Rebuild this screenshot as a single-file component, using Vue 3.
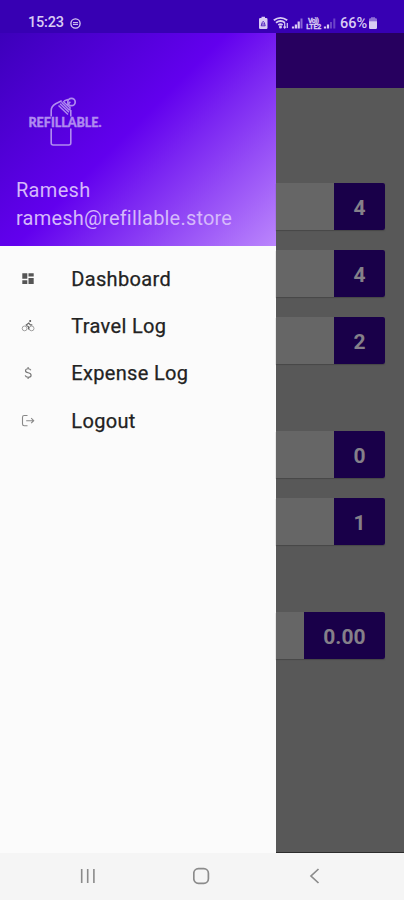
<script setup>
const groups = [['4', '4', '2'], ['0', '1'], ['0.00']]
const menu = [
  { label: 'Dashboard', icon: 'dashboard' },
  { label: 'Travel Log', icon: 'bike' },
  { label: 'Expense Log', icon: 'dollar' },
  { label: 'Logout', icon: 'logout' }
]
</script>

<template>
  <div class="phone">
    <header class="status">
      <span class="clock">15:23</span>
      <svg class="dnd" width="11" height="11" viewBox="0 0 11 11" fill="none" stroke="currentColor">
        <circle cx="5.5" cy="5.5" r="4.6" stroke-width="1.3" />
        <path d="M3 4.6h5M3 6.4h5" stroke-width="1" />
      </svg>
      <svg class="signals" width="78" height="16" viewBox="0 0 78 16" fill="none" stroke="currentColor">
        <path d="M0 4.2q0-1.200 1.200-1.200h1.300v-1.200h3.500v1.200h1.300q1.200 0 1.200 1.200v8.600q0 1.200-1.200 1.200h-6.100q-1.200 0-1.200-1.200z" fill="currentColor" stroke="none" />
        <path d="M2.200 10.800l.8-3 1.200-1.500 1.200 1.500.8 3zM3 9h2.400" stroke="#3700b3" stroke-width=".8" />
        <path d="M14.800 5.300q6.700-4.800 13.400 0M17 7.700q4.500-3.300 9 0M19.300 10q2.200-1.500 4.300 0" stroke-width="1.900" />
        <circle cx="21.500" cy="12" r="1.500" fill="currentColor" stroke="none" />
        <path d="M25.700 8v5m-1.200-1.300l1.200 1.300 1.200-1.300M28.300 13v-5" stroke-width="1.200" />
        <path d="M34 13.500v-2M36.900 13.500v-4M39.700 13.500v-7" stroke-width="2.200" />
        <path d="M42.500 13.500v-10" stroke-width="2" opacity=".5" />
        <text x="49" y="7.700" class="tiny" textLength="11">Vo))</text>
        <text x="47.300" y="14.200" class="tiny" textLength="15">LTE2</text>
        <path d="M66 13.500v-2M69 13.500v-4" stroke-width="2.200" />
        <path d="M72 13.500v-6.500M75.300 13.500v-10" stroke-width="2" opacity=".32" />
      </svg>
      <span class="percent">66%</span>
      <svg class="battery" width="10" height="14" viewBox="0 0 10 14" fill="currentColor">
        <path d="M1 3.500q0-1.300 1.300-1.300h.7v-1h4v1h.7q1.300 0 1.300 1.300v2.200h-8z" opacity=".55" />
        <path d="M1 5.300h8v6.500q0 1.200-1.200 1.200h-5.600q-1.200 0-1.200-1.200z" />
      </svg>
    </header>

    <main class="screen">
      <aside class="drawer">
        <div class="profile">
          <svg class="logo" width="80" height="52" viewBox="0 0 80 52" fill="none" stroke="currentColor">
            <path d="M23.200 19.500v-6q0-4 4.500-6.700l6-3M42.800 13v6.500M23.200 31.500v14.500q0 2 2 2h15.600q2 0 2-2v-14.500" stroke-width="1.600" />
            <path d="M30.500 8.500l9.500 9M32 6.800l9 8.500M33.500 5.200l8 8M35 4.200l7 6.500M36 4l4-1.500M42 9.500v4" stroke-width="1.400" />
            <circle cx="43.500" cy="5" r="3.700" stroke-width="1.700" />
            <path d="M39 8.500l3.300-3.800" stroke-width="1.600" />
            <text x="0.500" y="29.500" class="brand" textLength="73" lengthAdjust="spacingAndGlyphs">REFILLABLE.</text>
          </svg>
          <div class="name">Ramesh</div>
          <div class="email">ramesh@refillable.store</div>
        </div>
        <nav class="menu">
          <a v-for="item in menu" :key="item.label" class="item">
            <svg class="icon" width="14" height="14" viewBox="0 0 14 14" fill="none" stroke="currentColor">
              <path v-if="item.icon === 'dashboard'" d="M1.300 1.300h5v5.500h-5zM7.500 1.300h5.200v3.200h-5.200zM1.300 8.200h5v3.800h-5zM7.500 5.900h5.200v6.100h-5.200z" fill="#555" stroke="none" />
              <g v-else-if="item.icon === 'bike'" stroke="#888">
                <circle cx="3.600" cy="9.400" r="2.400" stroke-width=".8" />
                <circle cx="10.600" cy="9.400" r="2.400" stroke-width=".8" />
                <path d="M8.200 3.800l-3 2.300 2.300 1.600v2.800M7.800 4.200l1.500 1.700h2" stroke="#666" stroke-width="1.100" />
                <circle cx="9.200" cy="2" r="1" fill="#555" stroke="none" />
              </g>
              <path v-else-if="item.icon === 'dollar'" d="M9.800 4.200q-.6-1.500-2.700-1.500-2.600 0-2.600 2 0 1.500 2.700 2 2.900.6 2.900 2.500 0 2-2.900 2-2.500 0-3-1.900M7.100 1v1.700M7.100 11.200v1.700" stroke="#777" stroke-width="1.150" />
              <path v-else d="M6.500 1.500h-3.300q-1.700 0-1.700 1.700v6.800q0 1.700 1.700 1.700h3.300M5.200 6.700h7.500M10.200 4.200l2.500 2.500-2.500 2.500" stroke="#888" stroke-width="1.100" />
            </svg>
            <span>{{ item.label }}</span>
          </a>
        </nav>
      </aside>

      <section class="page">
        <div class="appbar"></div>
        <div class="lists">
          <div v-for="(group, g) in groups" :key="g" class="group">
            <div v-for="(value, i) in group" :key="i" class="card">
              <span class="value">{{ value }}</span>
            </div>
          </div>
        </div>
      </section>
    </main>

    <footer class="navbar">
      <svg width="18" height="18" viewBox="0 0 18 18" fill="none" stroke="currentColor" stroke-width="1.600">
        <path d="M2.700 2v14M8.700 2v14M14.900 2v14" />
      </svg>
      <svg width="18" height="18" viewBox="0 0 18 18" fill="none" stroke="currentColor" stroke-width="1.700">
        <rect x="0.800" y="1.700" width="14.600" height="14.600" rx="4.500" />
      </svg>
      <svg width="18" height="18" viewBox="0 0 18 18" fill="none" stroke="currentColor" stroke-width="1.700">
        <path d="M12.500 2l-7.500 7 7.500 7" />
      </svg>
    </footer>
  </div>
</template>

<style>
body {
  margin: 0;
}
</style>

<style scoped>
.phone {
  display: flex;
  flex-direction: column;
  width: 404px;
  height: 900px;
  overflow: hidden;
  font-family: Roboto, sans-serif;
  background: #f5f5f5;
}
.status {
  display: flex;
  align-items: center;
  flex: none;
  box-sizing: border-box;
  height: 33px;
  padding: 13px 25px 0 28px;
  background: #3700b3;
  color: #d9ccf3;
}
.clock {
  width: 42px;
  font-size: 14.500px;
  font-weight: 500;
  line-height: 20px;
  letter-spacing: -0.200px;
}
.signals {
  flex: none;
  margin-left: 178px;
}
.tiny {
  font-size: 7px;
  font-weight: 700;
  fill: currentColor;
  stroke: currentColor;
  stroke-width: 0.300px;
}
.percent {
  width: 28px;
  flex: none;
  margin-left: 3px;
  font-size: 14.500px;
  font-weight: 500;
  white-space: nowrap;
}
.battery {
  flex: none;
}
.screen {
  display: flex;
  height: 820px;
  flex: none;
}
.drawer {
  width: 276px;
  flex: none;
  background: #fbfbfb;
}
.profile {
  display: flex;
  flex-direction: column;
  box-sizing: border-box;
  height: 213px;
  padding: 64px 16px 0;
  color: #d5b8fb;
  background: linear-gradient(135deg, #3700b3, #6200ee 50%, #bb86fc) 0 100% / 276px 246px no-repeat;
}
.logo {
  margin-left: 12px;
  color: #b08bf0;
  overflow: visible;
}
.brand {
  font-family: Lato, sans-serif;
  font-size: 13.500px;
  font-weight: 900;
  fill: currentColor;
  stroke: currentColor;
  stroke-width: 0.400px;
}
.name {
  margin-top: 27px;
  font-size: 20px;
  line-height: 28px;
  letter-spacing: 0.300px;
}
.email {
  font-size: 20px;
  line-height: 28px;
  letter-spacing: 0.200px;
}
.menu {
  padding-top: 9px;
}
.item {
  display: flex;
  align-items: center;
  height: 47.300px;
  padding-left: 21px;
  font-size: 20px;
  letter-spacing: 0.330px;
  -webkit-text-stroke: 0.250px #222;
  color: #222;
}
.icon {
  margin-right: 36.300px;
}
.page {
  flex: 1;
  background: #585858;
  border-bottom: 1px solid #2c2c2c;
  box-sizing: border-box;
}
.appbar {
  height: 55px;
  background: #27005f;
}
.lists {
  display: flex;
  flex-direction: column;
  gap: 67px;
  padding: 95px 19px 0 0;
}
.group {
  display: flex;
  flex-direction: column;
  gap: 20px;
}
.card {
  display: flex;
  justify-content: flex-end;
  height: 47px;
  background: #666;
  border-radius: 0 2px 2px 0;
  box-shadow: 0 1px 1px #484848;
}
.value {
  box-sizing: border-box;
  min-width: 51px;
  padding: 0 19.500px;
  background: #190049;
  border-radius: 0 2px 2px 0;
  color: #858089;
  font-size: 21px;
  font-weight: 700;
  line-height: 50px;
}
.navbar {
  display: flex;
  align-items: center;
  justify-content: space-between;
  flex: 1;
  padding: 0 80px 2px 79px;
  background: #f5f5f5;
  color: #8b8b8b;
}
</style>
